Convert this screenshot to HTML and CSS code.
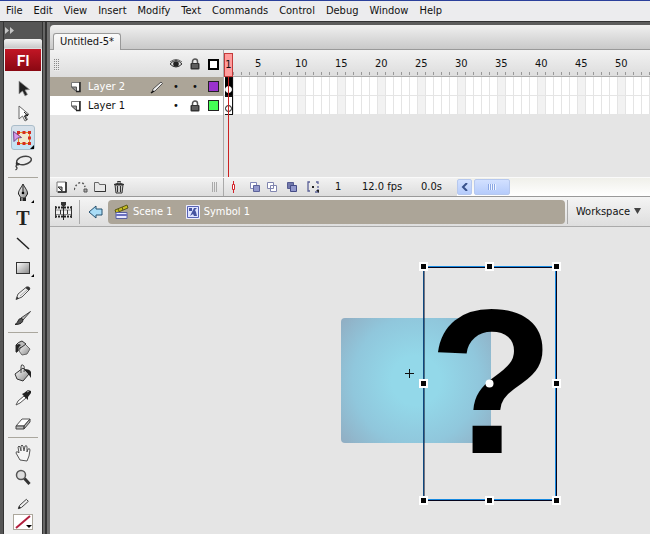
FILE: index.html
```html
<!DOCTYPE html>
<html lang="en">
<head>
<meta charset="utf-8">
<title>Untitled-5</title>
<link rel="stylesheet" href="styles.css">
</head>
<body>
<svg class="defs" aria-hidden="true">
  <defs>
    <linearGradient id="metal" x1="0" y1="0" x2="1" y2="1"><stop offset="0" stop-color="#fff"/><stop offset="1" stop-color="#888"/></linearGradient>
    <symbol id="lock" viewBox="0 0 12 12"><path d="M3.5 6V3.5a2.5 2.5 0 0 1 5 0V6" fill="none" stroke="#555" stroke-width="1.5"/><rect x="1.500" y="5" width="9" height="6.500" rx="1" fill="#333"/><path d="M3 7h6M3 9h6" stroke="#888"/></symbol>
    <symbol id="page" viewBox="0 0 12 12"><path d="M1.500 1.500h8v9H6.500L1.500 6z" fill="#fff" stroke="#777"/><path d="M1.500 6h5v4.500z" fill="#999" stroke="#555"/><path d="M10 1v9.500H6" fill="none" stroke="#222" stroke-width="1.500"/></symbol>
  </defs>
</svg>
<div class="app">
  <nav class="menu" aria-label="Main menu">
    <button>File</button><button>Edit</button><button>View</button><button>Insert</button><button>Modify</button><button>Text</button><button>Commands</button><button>Control</button><button>Debug</button><button>Window</button><button>Help</button>
  </nav>
  <div class="workspace">
    <aside class="tools" aria-label="Tools">
      <button class="expand" aria-label="Collapse"><svg width="10" height="7"><path d="M0 0l4 3.500L0 7zM5 0l4 3.500L5 7z" fill="#c4c4c4"/></svg></button>
      <div class="panel">
        <div class="grip"></div>
        <div class="logo">Fl</div>
        <div class="group first">
          <button class="tool" aria-label="Selection"><svg viewBox="0 0 24 24"><path d="M8 5v13l3.500-3 2.500 5 2.500-1.500-2.500-4.500 4.500-.5z" fill="#222" stroke="#999" stroke-width=".7"/></svg></button>
          <button class="tool" aria-label="Subselection"><svg viewBox="0 0 24 24"><path d="M8 5v13l3.500-3 2.500 5 2.500-1.500-2.500-4.500 4-.5z" fill="#fff" stroke="#666"/><path d="M13 11l4 3.500-3.500.5 2 4" fill="none" stroke="#111"/></svg></button>
          <button class="tool selected" aria-label="Free transform"><svg viewBox="0 0 24 24"><path d="M7.500 6.500h11v11h-11z" fill="#efe8d0" stroke="#e98b20"/><path d="M6 5h3v3H6zM11.500 5h3v3h-3zM17 5h3v3h-3zM17 10.500h3v3h-3zM17 16h3v3h-3zM11.500 16h3v3h-3zM6 16h3v3H6z" fill="#d52b20"/><path d="M2.500 5.500l8 6-4 .5-3.500 3.500z" fill="#d99ae8" stroke="#704486"/><path d="M23 19v4h-4z" fill="#000"/></svg></button>
          <button class="tool" aria-label="Lasso"><svg viewBox="0 0 24 24"><ellipse cx="13" cy="9.500" rx="7.500" ry="4" transform="rotate(-12 13 9.500)" fill="none" stroke="#444" stroke-width="1.500"/><path d="M6 11c-2 2 1 4 2 2.500S5 12 5 15.500c1 1 2 2-.5 3.500" fill="none" stroke="#333" stroke-width="1.200"/></svg></button>
        </div>
        <hr>
        <div class="group">
          <button class="tool" aria-label="Pen"><svg viewBox="0 0 24 24"><path d="M12 3C10 7 7 10 7.500 13l2.500 4h4l2.500-4C17 10 14 7 12 3z" fill="url(#metal)" stroke="#222"/><path d="M12 4v8" stroke="#222"/><circle cx="12" cy="12" r="1.300"/><path d="M9 17h6v3H9z" fill="#222"/><path d="M11 17v3" stroke="#ddd"/><path d="M23 19v3h-3z" fill="#000"/></svg></button>
          <button class="tool letter" aria-label="Text">T</button>
          <button class="tool" aria-label="Line"><svg viewBox="0 0 24 24"><path d="M6 7l12 11" stroke="#222" stroke-width="1.500"/></svg></button>
          <button class="tool" aria-label="Rectangle"><svg viewBox="0 0 24 24"><rect x="5.500" y="6.500" width="13" height="11" fill="url(#metal)" stroke="#333"/><path d="M23 18v3h-3z" fill="#000"/></svg></button>
          <button class="tool" aria-label="Pencil"><svg viewBox="0 0 24 24"><path d="M5 18.500l2-5.500 8.500-7q3-1 3.500 2L11 16z" fill="#eee" stroke="#555"/><path d="M9 15l7-6" stroke="#aaa"/><path d="M15.500 6q3-1 3.500 2l-1.500 1.500-3-2.500zM5 18.500l1-3 2 2z" fill="#333"/></svg></button>
          <button class="tool" aria-label="Brush"><svg viewBox="0 0 24 24"><path d="M19.500 5.500L12 14l-2-2z" fill="#bbb" stroke="#444"/><path d="M12 13.500q0 5-8 5 3-2 3-3.500 1-3 3.500-2.500z" fill="#555" stroke="#222"/></svg></button>
        </div>
        <hr>
        <div class="group">
          <button class="tool" aria-label="Ink bottle"><svg viewBox="0 0 24 24"><path d="M10 11l4-3 5 5-3 5-5 1-3-4z" fill="url(#metal)" stroke="#666"/><path d="M5 16V9q2-3 6-4l4 3-4 3q-3 0-4 4z" fill="#bbb" stroke="#333"/><path d="M5 9v8l2-2q0-4 3-6l-2-1z" fill="#222"/></svg></button>
          <button class="tool" aria-label="Paint bucket"><svg viewBox="0 0 24 24"><path d="M4 13l8-6 6 6-6 7-6-2z" fill="url(#metal)" stroke="#333"/><path d="M10 12V6q0-3 2-2t1 7" fill="none" stroke="#444"/><path d="M13 8q6 0 7 3v6l-2-3z" fill="#222"/></svg></button>
          <button class="tool" aria-label="Eyedropper"><svg viewBox="0 0 24 24"><path d="M5 19l2-4 6-5 2 2-6 5z" fill="#fff" stroke="#555"/><path d="M11 8l2-1 4-3 3 1v2l-3 4v3z" fill="#222"/><path d="M16 6l2-1" stroke="#aaa"/></svg></button>
          <button class="tool" aria-label="Eraser"><svg viewBox="0 0 24 24"><path d="M5 15l6-7h8l-6 7z" fill="#fff" stroke="#555"/><path d="M5 15v3h8v-3zM13 15v3l6-7V8z" fill="#bbb" stroke="#444"/></svg></button>
        </div>
        <hr>
        <div class="group">
          <button class="tool" aria-label="Hand"><svg viewBox="0 0 24 24"><path d="M9 19l-4-7q0-2 2-1l1 1-1-6q1-2 2 0l1 4V5q1-2 2 0l1 5 1-5q2-1 2 1v5l1-3q2-1 2 1l-1 6-2 5z" fill="#f4f4f4" stroke="#555"/></svg></button>
          <button class="tool" aria-label="Zoom"><svg viewBox="0 0 24 24"><circle cx="10" cy="9" r="4.500" fill="#ddd" stroke="#555" stroke-width="1.500"/><path d="M13.500 12.500l5 5.500" stroke="#333" stroke-width="3"/></svg></button>
        </div>
        <div class="stroke">
          <svg width="16" height="16" viewBox="0 0 24 24"><path d="M5 19l2-5L17 5l3 3L10 17z" fill="#eee" stroke="#444" stroke-width="1.500"/><path d="M5 19l1-4 3 3z" fill="#222"/></svg>
          <button class="swatch" aria-label="Stroke color"><svg width="17" height="14"><path d="M1 13L15 1" stroke="#b11e3c" stroke-width="2"/><path d="M11 10h6l-3 3z" fill="#000"/></svg></button>
        </div>
      </div>
    </aside>
    <main class="doc">
      <div class="tabs"><button class="tab">Untitled-5*</button></div>
      <section class="timeline" aria-label="Timeline">
        <div class="layers">
          <div class="head">
            <span class="dots"></span>
            <svg class="col" viewBox="0 0 12 12"><path d="M0 6q6-7 12 0-6 6-12 0z" fill="#ddd" stroke="#333"/><path d="M0 4q6-5 12 0" fill="none" stroke="#666"/><circle cx="6" cy="6" r="2.800" fill="#222"/></svg>
            <svg class="col"><use href="#lock"/></svg>
            <span class="chip outline"></span>
          </div>
          <div class="layer active"><svg class="icon"><use href="#page"/></svg><span class="name">Layer 2</span><svg class="edit" viewBox="0 0 14 14"><path d="M2 12l1-3 8-7 1.500 1.500L5 11z" fill="#eee" stroke="#333" stroke-width=".8"/><path d="M1 13l3-2" stroke="#111" stroke-width="1.500"/></svg><span class="col">•</span><span class="col">•</span><span class="chip purple"></span></div>
          <div class="layer"><svg class="icon"><use href="#page"/></svg><span class="name">Layer 1</span><span class="col">•</span><svg class="col"><use href="#lock"/></svg><span class="chip green"></span></div>
        </div>
        <div class="frames">
          <div class="ruler"><span>5</span><span>10</span><span>15</span><span>20</span><span>25</span><span>30</span><span>35</span><span>40</span><span>45</span><span>50</span></div>
          <div class="track"><span class="key dark"></span></div>
          <div class="track"><span class="key"></span></div>
          <div class="playhead">1</div>
        </div>
      </section>
      <div class="status">
        <div class="left">
          <button aria-label="Insert layer"><svg viewBox="0 0 14 14"><path d="M2 2h9v10H2z" fill="#fff" stroke="#777"/><path d="M3 7h4v4z" fill="#aaa" stroke="#333"/><path d="M11 2v10H3" fill="none" stroke="#222" stroke-width="1.500"/></svg></button>
          <button aria-label="Add motion guide"><svg viewBox="0 0 14 14"><path d="M0 10Q2 3 7 2.500 10 3 11 7" fill="none" stroke="#555" stroke-width="1.500" stroke-dasharray="2 2"/><path d="M10 9h3v3h-3z" fill="#aaa" stroke="#555"/></svg></button>
          <button aria-label="Insert layer folder"><svg viewBox="0 0 14 14"><path d="M1.500 2.500h4l1 2h6v7h-11z" fill="#e8e8e8" stroke="#666"/><path d="M12.500 5v6.500H2" fill="none" stroke="#333"/></svg></button>
          <button aria-label="Delete layer"><svg viewBox="0 0 14 14"><path d="M3 5h8l-1 8H4z" fill="#ccc" stroke="#333"/><path d="M5.500 6v6M8.500 6v6" stroke="#333"/><path d="M2 4.500q5-3 10 0z" fill="#777" stroke="#333"/><path d="M5.500 2.500v-1h3v1" fill="none" stroke="#333"/></svg></button>
          <span class="bars"></span>
        </div>
        <div class="right">
          <button class="center" aria-label="Center frame"><svg viewBox="0 0 14 14"><path d="M7.500 1v12" stroke="#d3232b"/><path d="M6.500 4.500h2v5h-2z" fill="#fff" stroke="#d3232b"/></svg></button>
          <button class="onion" aria-label="Onion skin"><svg viewBox="0 0 14 14"><path d="M2.500 2.500h6v6h-6z" fill="#fff" stroke="#8288b8"/><path d="M5.500 5.500h6v6h-6z" fill="#9298cc" stroke="#5c6299"/></svg></button>
          <button aria-label="Onion skin outlines"><svg viewBox="0 0 14 14"><path d="M2.500 2.500h6v6h-6zM5.500 5.500h6v6h-6z" fill="#fff" stroke="#8085af"/></svg></button>
          <button class="multi" aria-label="Edit multiple frames"><svg viewBox="0 0 14 14"><path d="M2.500 2.500h6v6h-6z" fill="#7379ac" stroke="#555b91"/><path d="M5.500 5.500h6v6h-6z" fill="#9298cc" stroke="#444b86"/></svg></button>
          <button class="markers" aria-label="Modify onion markers"><svg viewBox="0 0 14 14"><path d="M4 2H2v9h2M10 2h2v2M12 6v2M12 9v3h-3" fill="none" stroke="#5b6198" stroke-width="1.300"/><path d="M6 6h2v2H6zM10 10h3v3z" fill="#222"/></svg></button>
          <span class="current">1</span><span class="fps">12.0 fps</span><span class="time">0.0s</span>
          <div class="scroll"><button class="arrow" aria-label="Scroll left"><svg width="8" height="8"><path d="M6 0L2 4l4 4" fill="none" stroke="#39528c" stroke-width="2"/></svg></button><span class="thumb"></span></div>
        </div>
      </div>
      <div class="editbar">
        <button class="film" aria-label="Timeline"><svg width="20" height="20"><path d="M1 6h17v9H1z" fill="#eee"/><path d="M1 5.500h17M1 14.500h17" stroke="#222" stroke-width="2" stroke-dasharray="2 1"/><path d="M1 8h17M1 12.500h17" stroke="#888"/><path d="M1.500 4v12M6.500 8v4M13.500 8v4M17.500 4v12" stroke="#333"/><path d="M9.500 2v16" stroke="#222"/><path d="M7 0h5v3L9.500 5 7 3z" fill="#333"/></svg></button>
        <button class="back" aria-label="Back"><svg width="16" height="14"><path d="M1 7l7-6v3h6v6H8v3z" fill="#a9dcf6" stroke="#24506f"/></svg></button>
        <div class="crumbs">
          <button><svg width="16" height="16"><path d="M1 6L13 1l1 3L2 9z" fill="#c6bd24" stroke="#5b5714"/><path d="M4 5l1 2M8 3l1 3" stroke="#5b5714"/><path d="M2 8.500h11v6H2z" fill="#e9e9ff" stroke="#5a60a0"/><path d="M2 11h11" stroke="#6a70c0" stroke-width="2"/></svg>Scene 1</button>
          <button><svg width="16" height="16"><path d="M1.500 1.500h13v13h-13z" fill="#e9edff" stroke="#eef"/><path d="M2.500 2.500h11v11h-11z" fill="#dfe4ff" stroke="#5965b5"/><path d="M4 4h3v3H4zM9 4h3l-2 2 1 2 1 4H9L8 10l-3 2 2-4z" fill="#4653a0"/></svg>Symbol 1</button>
        </div>
        <button class="ws">Workspace <svg width="8" height="7"><path d="M0 0h7L3.500 6z" fill="#444"/></svg></button>
      </div>
      <section class="stage" aria-label="Stage">
        <div class="artboard"></div>
        <div class="glyph">?</div>
        <svg class="handles" width="142" height="244" aria-hidden="true">
          <path d="M4.500 4.500h132v233h-132z" fill="none" stroke="#1689e0"/><path d="M5 5.500h132.500v233H5z" fill="none" stroke="#05051d"/>
          <g fill="#050505" stroke="#fff" stroke-width="2"><path d="M1 1h7v7H1zM67 1h7v7h-7zM134 1h7v7h-7zM1 118h7v7H1zM134 118h7v7h-7zM1 235h7v7H1zM67 235h7v7h-7zM134 235h7v7h-7z"/></g>
          <circle cx="70.500" cy="121.500" r="4" fill="#fff"/>
        </svg>
        <svg class="cross" width="9" height="9" aria-hidden="true"><path d="M4.500 0v9M0 4.500h9" stroke="#111"/></svg>
      </section>
    </main>
  </div>
</div>
</body>
</html>
```
FILE: styles.css
```css
* { box-sizing: border-box; }
body { margin: 0; font: 11px/14px "DejaVu Sans Condensed", Tahoma, sans-serif; color: #111; }
button { font: inherit; color: inherit; background: none; border: 0; padding: 0; display: flex; align-items: center; justify-content: center; flex: none; }
svg { display: block; flex: none; }
.defs { position: absolute; width: 0; height: 0; }
.app { min-height: 100vh; display: flex; flex-direction: column; background: #5c5c5c; overflow: hidden; }

.menu { display: flex; gap: 11px; height: 22px; padding: 0 6px; border-top: 1px solid #2b409b; border-bottom: 1px solid #333; background: #ececee; }

.workspace { flex: 1; display: flex; }
.tools { width: 50px; flex: none; padding: 0 8px 0 4px; display: flex; flex-direction: column; background: linear-gradient(90deg, #555 0 3px, #333 3px 4px, #555 4px 42px, #333 42px 43px, #666 43px 45px, #333 45px 47px, #707070 47px); }
.expand { width: 12px; height: 17px; }
.panel { flex: 1; display: flex; flex-direction: column; background: #efefef; border-radius: 3px 3px 0 0; padding: 0 1px; }
.grip { height: 10px; background: linear-gradient(#f4f4f4, #c9c9c9); margin: 0 -1px; border-radius: 3px 3px 0 0; border-bottom: 1px solid #ddd; }
.logo { height: 22px; background: linear-gradient(#c21625, #890812); color: #fff; font: bold 16px/22px Lato, sans-serif; text-align: center; }
.group { display: flex; flex-direction: column; align-items: center; }
.first { padding-top: 4px; }
.tool { width: 24px; height: 25px; }
.tool svg { width: 24px; height: 24px; }
.tool.selected { background: linear-gradient(#d8e0e8, #c3e3f6); border: 1px solid #aabdca; border-radius: 3px; }
.letter { font: bold 20px/24px "Liberation Serif", serif; color: #222; }
.panel hr { width: 30px; height: 1px; margin: 2px auto; border: 0; background: #aaa79e; }
.stroke { display: flex; flex-direction: column; align-items: center; padding-top: 6px; gap: 2px; }
.swatch { width: 20px; height: 16px; background: #fff; border: 1px solid #aca79c; }

.doc { flex: 1; min-width: 0; padding-top: 3px; display: flex; flex-direction: column; }
.tabs { height: 25px; flex: none; padding: 8px 3px 0; background: linear-gradient(#f0f0f0, #c9c9c9); border-bottom: 1px solid #999; border-radius: 4px 0 0 0; }
.tab { height: 17px; padding: 0 6px; background: linear-gradient(#fafafa, #ececec); border: 1px solid #999; border-bottom: 0; border-radius: 3px 3px 0 0; }

.timeline { display: grid; grid-template-columns: 174px 1fr; height: 127px; background: #e5e5e5; }
.layers { border-right: 1px solid #aaa; }
.head { height: 27px; display: flex; align-items: center; padding: 1px 4px 0; background: linear-gradient(#f2f2f2, #ddd); }
.dots { width: 6px; height: 13px; margin-right: auto; background: repeating-linear-gradient(0deg, #eaeaea 0 1px, transparent 1px 2px), repeating-linear-gradient(90deg, #888 0 1px, transparent 1px 2px); }
.layer { height: 19px; display: flex; align-items: center; padding: 0 4px 0 20px; background: #fff; }
.active { background: #aca598; color: #fff; }
.icon { width: 12px; height: 12px; }
.name { margin: 0 auto 0 6px; }
.edit { width: 14px; height: 14px; margin-right: 6px; }
.col { width: 12px; height: 12px; line-height: 12px; margin-right: 7px; text-align: center; color: #111; }
.chip { width: 11px; height: 11px; border: 1px solid #222; }
.outline { border: 2px solid #000; background: #fff; }
.purple { background: #9932cc; }
.green { background: #4f5; }

.frames { position: relative; overflow: hidden; }
.ruler { height: 27px; display: flex; padding-left: 31px; line-height: 28px; border-bottom: 1px solid #aaa; background: repeating-linear-gradient(90deg, #999 0 1px, transparent 1px 8px) 1px 22px / 100% 3px no-repeat, linear-gradient(#f2f2f2, #ddd); }
.ruler span { width: 40px; flex: none; }
.ruler span:last-child { width: auto; }
.track { height: 19px; padding-left: 1px; border-bottom: 1px solid #e5e5e5; background: repeating-linear-gradient(90deg, #e4e4e4 0 1px, transparent 1px 8px) 1px 0, repeating-linear-gradient(90deg, #fff 0 32px, #f2f2f2 32px 40px) 1px 0; }
.key { width: 8px; height: 19px; display: flex; align-items: flex-end; justify-content: center; padding-bottom: 2px; background: #fff; border: solid #111; border-width: 1px 1px 1px 0; }
.key::after { content: ""; width: 5px; height: 5px; border: 1px solid #111; border-radius: 50%; }
.dark { background: #000; }
.dark::after { background: #fff; border-color: #fff; }
.playhead { position: absolute; left: 0; top: 3px; width: 9px; height: 24px; line-height: 22px; text-align: center; background: #ff9c9c; border: 1px solid #c43a3a; }
.playhead::after { content: ""; position: absolute; left: 3px; top: 23px; width: 1px; height: 101px; background: #c22; }

.status { height: 20px; flex: none; display: grid; grid-template-columns: 174px 1fr; border-top: 1px solid #fafafa; border-bottom: 1px solid #999; background: linear-gradient(#f2f2f2, #ddd); }
.left, .right { display: flex; align-items: center; min-width: 0; }
.left { padding: 0 6px 0 5px; gap: 5px; border-right: 1px solid #aaa; }
.right { padding-left: 2px; }
.status button svg { width: 14px; height: 14px; }
.bars { width: 5px; height: 10px; margin-left: auto; background: repeating-linear-gradient(90deg, #aaa 0 1px, transparent 1px 2px); }
.onion { margin-left: 8px; }
.onion + button { margin-left: 3px; }
.multi { margin-left: 6px; }
.markers { margin-left: 7px; }
.current { width: 27px; margin-left: 15px; }
.fps { width: 59px; }
.time { width: 36px; }
.scroll { flex: 1; align-self: stretch; display: flex; gap: 2px; padding: 1px 0; background: linear-gradient(#f0f0ea, #fff); }
.arrow, .thumb { height: 16px; background: linear-gradient(#d2e0ff, #b5cbfb); border: 1px solid #b6c8ee; border-radius: 2px; }
.arrow { width: 15px; }
.scroll .arrow svg { width: 8px; height: 8px; }
.thumb { width: 36px; display: flex; align-items: center; justify-content: center; }
.thumb::before { content: ""; width: 8px; height: 6px; background: repeating-linear-gradient(90deg, #8aa6e4 0 1px, #eef4ff 1px 2px); }

.editbar { height: 30px; flex: none; display: flex; align-items: center; padding: 0 8px 0 4px; background: linear-gradient(#f4f4f4, #dedede); border-bottom: 1px solid #aaa; }
.film { height: 24px; padding-right: 5px; border-right: 1px solid #aaa; }
.back { margin: 0 4px 0 8px; }
.crumbs { flex: 1; height: 24px; display: flex; gap: 12px; padding-left: 6px; background: #aca598; border-radius: 4px; color: #fff; }
.crumbs button { gap: 3px; }
.ws { height: 24px; gap: 4px; margin-left: 2px; padding-left: 8px; border-left: 1px solid #aaa; }

.stage { position: relative; flex: 1; min-height: 307px; overflow: hidden; background: #e5e5e5; }
.artboard { position: absolute; left: 291px; top: 91px; width: 150px; height: 125px; border-radius: 4px; background: radial-gradient(circle at 50% 50%, #93d8e9 0 25%, #90c7dc 65%, #91adc2 100%); }
.glyph { position: absolute; left: 375px; top: 38px; width: 133px; height: 234px; text-align: center; font: bold 206px/234px "Liberation Sans", Arial, sans-serif; color: #000; }
.handles { position: absolute; left: 369px; top: 35px; }
.cross { position: absolute; left: 355px; top: 142px; }
```
